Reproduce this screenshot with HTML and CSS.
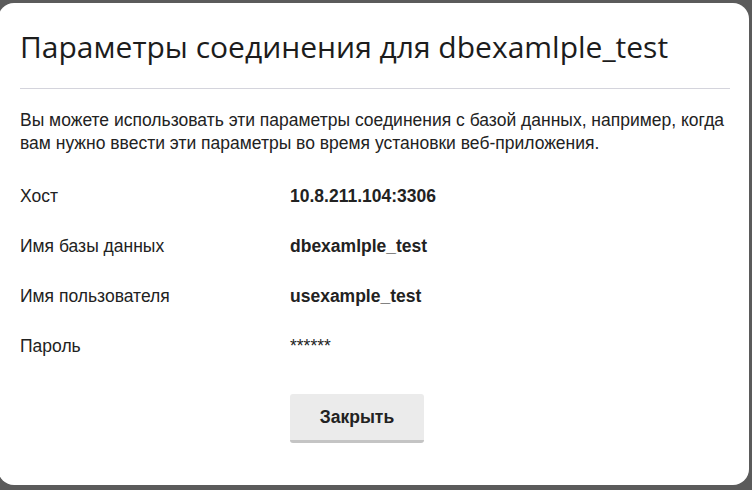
FILE: index.html
```html
<!DOCTYPE html>
<html lang="ru">
<head>
<meta charset="utf-8">
<title>Параметры соединения</title>
<link rel="stylesheet" href="styles.css">
</head>
<body>
<div class="dialog">
  <h1 class="title">Параметры соединения для dbexamlple_test</h1>
  <p class="intro">Вы можете использовать эти параметры соединения с базой данных, например, когда вам нужно ввести эти параметры во время установки веб-приложения.</p>
  <div class="rows">
    <div class="label">Хост</div><div class="value">10.8.211.104:3306</div>
    <div class="label">Имя базы данных</div><div class="value">dbexamlple_test</div>
    <div class="label">Имя пользователя</div><div class="value">usexample_test</div>
    <div class="label">Пароль</div><div class="value pass">******</div>
  </div>
  <div class="actions">
    <span></span><button class="btn">Закрыть</button>
  </div>
</div>
</body>
</html>
```
FILE: styles.css
```css
html, body {
  margin: 0;
  padding: 0;
  background: #5b5b5b;
  overflow: hidden;
}
body {
  width: 752px;
  height: 490px;
  padding-top: 3px;
  box-sizing: border-box;
}
.dialog {
  margin-left: -2px;
  width: 751px;
  height: 482px;
  box-sizing: border-box;
  background: #ffffff;
  border-radius: 16px;
  padding: 24px 19px 0 22px;
  font-family: "Liberation Sans", Arial, sans-serif;
  color: #222222;
}
.title {
  margin: 0;
  font-family: "Open Sans", sans-serif;
  font-weight: 400;
  font-size: 30px;
  line-height: 40px;
  color: #1c1c1c;
  padding-bottom: 21px;
  border-bottom: 1px solid #d4d4dc;
}
.intro {
  margin: 20px 0 0 0;
  font-size: 17.5px;
  line-height: 23px;
}
.rows {
  display: grid;
  grid-template-columns: 270px 1fr;
  grid-auto-rows: 50px;
  margin-top: 16px;
  font-size: 17.5px;
  align-items: center;
}
.value {
  font-weight: 700;
}
.pass {
  font-weight: 400;
}
.actions {
  display: grid;
  grid-template-columns: 270px 1fr;
  margin-top: 23px;
}
.btn {
  width: 134px;
  height: 49px;
  justify-self: start;
  border: 0;
  border-bottom: 3px solid #c4c4c4;
  border-radius: 3px;
  background: #ebebeb;
  font-family: "Liberation Sans", Arial, sans-serif;
  font-weight: 700;
  font-size: 17.5px;
  color: #222222;
  padding: 0;
}
```
